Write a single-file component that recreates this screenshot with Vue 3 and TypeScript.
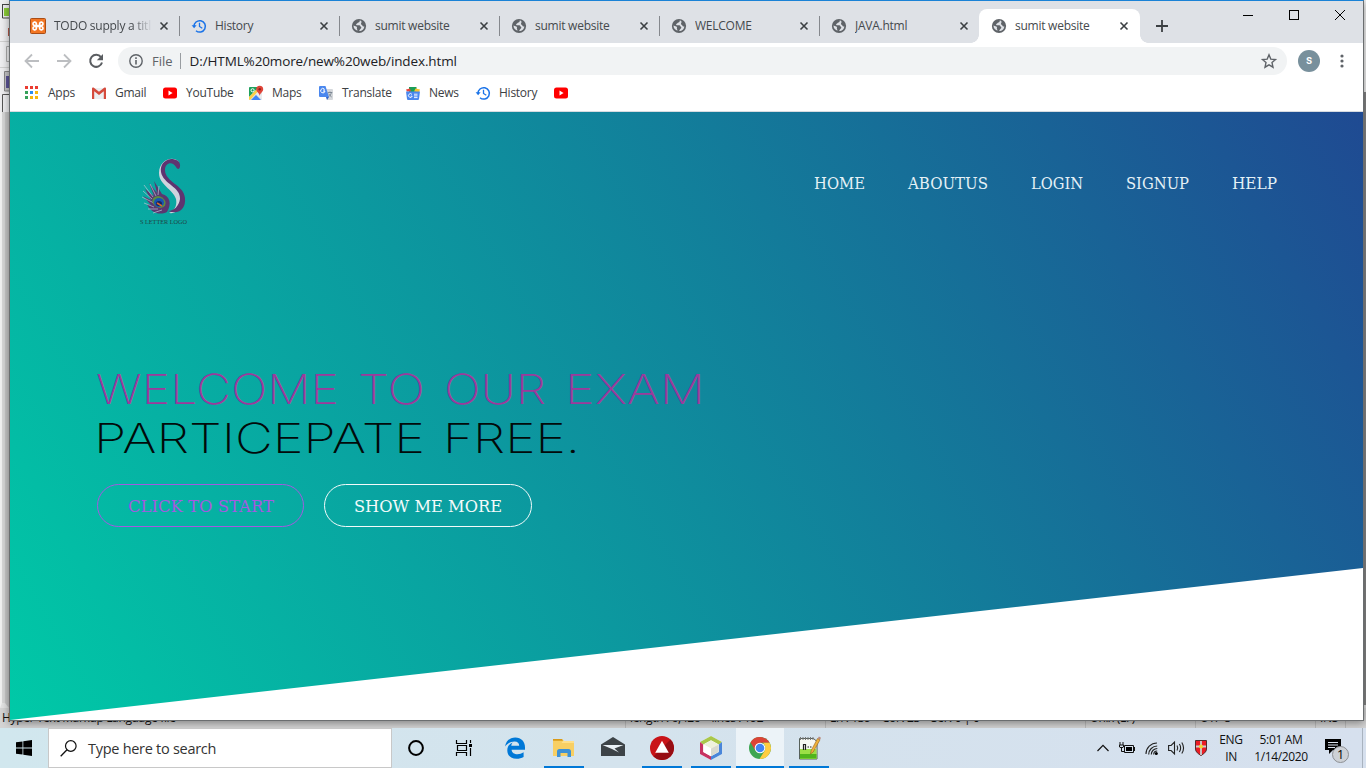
<script setup lang="ts">
interface Tab { title: string; icon: string; active?: boolean }
interface Bookmark { label: string; icon: string; width: number }
interface TaskItem { icon: string; running?: boolean; active?: boolean; name: string }
interface Word { t: string; x: number; w: number }

const tabs: Tab[] = [
  { title: 'TODO supply a titl', icon: 'xampp' },
  { title: 'History', icon: 'history' },
  { title: 'sumit website', icon: 'globe' },
  { title: 'sumit website', icon: 'globe' },
  { title: 'WELCOME', icon: 'globe' },
  { title: 'JAVA.html', icon: 'globe' },
  { title: 'sumit website', icon: 'globe', active: true },
]

const bookmarks: Bookmark[] = [
  { label: 'Apps', icon: 'apps', width: 67 },
  { label: 'Gmail', icon: 'gmail', width: 71 },
  { label: 'YouTube', icon: 'youtube', width: 86 },
  { label: 'Maps', icon: 'maps', width: 70 },
  { label: 'Translate', icon: 'translate', width: 87 },
  { label: 'News', icon: 'news', width: 70 },
  { label: 'History', icon: 'history', width: 78 },
  { label: '', icon: 'youtube', width: 20 },
]

const nav = [
  { label: 'HOME', w: 50 },
  { label: 'ABOUTUS', w: 79 },
  { label: 'LOGIN', w: 51 },
  { label: 'SIGNUP', w: 62 },
  { label: 'HELP', w: 44 },
]

const lineOne: Word[] = [
  { t: 'WELCOME', x: -1, w: 243 },
  { t: 'TO', x: 261, w: 67 },
  { t: 'OUR', x: 347, w: 102 },
  { t: 'EXAM', x: 468, w: 140 },
]
const lineTwo: Word[] = [
  { t: 'PARTICEPATE', x: -3, w: 331 },
  { t: 'FREE.', x: 346, w: 137 },
]

const tasks: TaskItem[] = [
  { name: 'Edge', icon: 'edge' },
  { name: 'Explorer', icon: 'explorer', running: true },
  { name: 'Mail', icon: 'mail' },
  { name: 'Player', icon: 'triangle', running: true },
  { name: 'NetBeans', icon: 'cube', running: true },
  { name: 'Chrome', icon: 'chrome', running: true, active: true },
  { name: 'Notepad++', icon: 'npp', running: true },
]

const statusCells = [
  { text: 'Hyper Text Markup Language file', w: 626 },
  { text: 'length : 6,426    lines : 192', w: 200 },
  { text: 'Ln : 139    Col : 23    Sel : 0 | 0', w: 260 },
  { text: 'Unix (LF)', w: 110 },
  { text: 'UTF-8', w: 120 },
  { text: 'INS', w: 30 },
]
</script>

<template>
  <div class="desktop">
    <svg class="defs" width="0" height="0">
      <symbol id="globe" viewBox="0 0 16 16">
        <circle cx="8" cy="8" r="7.100" fill="#5f6368" />
        <path d="M8.600 2.600c.3 1-.2 1.700-1.200 1.900-.9.2-.9 1-1.700 1.300-.8.3-.8 1.300.1 1.500h2.600c.9.200.9 1.100 1.500 1.500.7.500.500 1.500-.3 1.900-.8.400-.8 1.500-1.600 2.400 3.100.1 5.200-2.200 5.300-4.900-.9.600-1.700.2-1.900-.6-.2-.9-1.300-.8-1.400-1.700-.1-.8.800-1.300.5-2.300-.2-.5-1.100-1-1.900-1z" fill="#dee1e6" />
        <path d="M2.500 7.600c.9.100 1.800.8 2.700 1 .9.200.9 1 .7 1.600-.2.900.6 1 .5 2.500C4 12 2.400 10 2.500 7.600z" fill="#dee1e6" />
      </symbol>
      <symbol id="history" viewBox="0 0 16 16">
        <path d="M3 8.600A5.700 5.700 0 1 1 5 12.700" fill="none" stroke="#1a73e8" stroke-width="1.500" />
        <path d="M.6 7.300h5L3.100 10.300z" fill="#1a73e8" />
        <path d="M8.500 4.800v3.700l2.800 1.700" fill="none" stroke="#1a73e8" stroke-width="1.300" />
      </symbol>
      <symbol id="xampp" viewBox="0 0 16 16">
        <rect x=".5" y=".5" width="15" height="15" rx="1" fill="#f37623" stroke="#a94d16" />
        <path d="M6.300 6.200V5.300a1.700 1.700 0 1 0-1.700 2.200h6.800a1.700 1.700 0 1 0-1.700-2.200v5.400a1.700 1.700 0 1 0 1.700-2.200H4.600a1.700 1.700 0 1 0 1.700 2.200z" fill="none" stroke="#fff" stroke-width="1.700" />
      </symbol>
      <symbol id="apps" viewBox="0 0 16 16">
        <path d="M1 1h3v3H1zM6 1h3v3H6zM11 1h3v3h-3z" fill="#ea3c31" />
        <path d="M1 6h3v3H1zM1 11h3v3H1z" fill="#36a15a" />
        <path d="M6 6h3v3H6z" fill="#2a8cf0" />
        <path d="M11 6h3v3h-3zM6 11h3v3H6zM11 11h3v3h-3z" fill="#f8b60c" />
      </symbol>
      <symbol id="gmail" viewBox="0 0 16 16">
        <path d="M2 3h12v11H2z" fill="#eceff1" />
        <path d="M1 3.500v10.500h2.200V6.200L8 10l4.800-3.800V14H15V3.500c0-1-1.100-1.400-1.900-.8L8 6.800 2.900 2.700C2.100 2.100 1 2.500 1 3.500z" fill="#d54b3d" />
      </symbol>
      <symbol id="youtube" viewBox="0 0 16 16">
        <rect x="1" y="2.500" width="14" height="11" rx="2.500" fill="#f00" />
        <path d="M6.500 5.600v4.800L10.600 8z" fill="#fff" />
      </symbol>
      <symbol id="maps" viewBox="0 0 16 16">
        <rect x="1" y="2" width="13" height="13" rx="1" fill="#dfe3e6" />
        <path d="M1 3q0-1 1-1h9L1 12z" fill="#1fa15d" />
        <path d="M3 15l5-5 5 5z" fill="#4285f4" />
        <path d="M1 12l10-10 2 1L2 15q-1-.2-1-1z" fill="#fdd045" />
        <path d="M8 9l6 5V9l-3-3z" fill="#e9ecee" />
        <circle cx="4.600" cy="5.300" r="1.600" fill="none" stroke="#fff" />
        <path d="M11.700 11C11.500 8 8.200 7 8.200 4.200a3.500 3.500 0 0 1 7 0C15.200 7 12 8 11.700 11z" fill="#e04438" />
        <circle cx="11.700" cy="4.200" r="1.200" fill="#8f1f1a" />
      </symbol>
      <symbol id="translate" viewBox="0 0 16 16">
        <path d="M6 4h8q1 0 1 1v9q0 1-1 1H9z" fill="#d5d8dc" />
        <path d="M2 1h5.500L11 12H2q-1 0-1-1V2q0-1 1-1z" fill="#4a87ee" />
        <path d="M8 12h3l-2 3z" fill="#3062c8" />
        <path d="M7 5H5.300M6.400 4.100A2.200 2.200 0 1 0 7 6.200H5.200" fill="none" stroke="#fff" />
        <path d="M9.800 7.500h4.500M12 6.500v1M13.500 7.500q-.8 3-2.700 4.200M10.700 8.700q1 2 3 3.300" fill="none" stroke="#6f7b88" stroke-width=".8" />
      </symbol>
      <symbol id="news" viewBox="0 0 16 16">
        <path d="M4 2h7.500v5H4z" fill="#1b9e55" /><path d="M1 4.500L5 3.500l1 3H2z" fill="#e8453c" />
        <path d="M10.500 3.500l4.500 1-1 3-5-1z" fill="#fbc02d" />
        <path d="M1 6.500h14l-1 7.500q-.1 1-1 1H3q-.9 0-1-1z" fill="#4a87ee" />
        <path d="M7 9.500A1.900 1.900 0 1 0 7.200 11.200H5.700M9 9.200h3.500M9 10.900h3.500M9 12.600h3.500" fill="none" stroke="#fff" stroke-width=".9" />
      </symbol>
      <symbol id="edge" viewBox="0 0 24 24">
        <path d="M2 10.500C3 5 6.800 1.500 12.300 1.500c6 0 9.700 4.300 9.700 9.800v2.400H8.600c.2 3 2.700 4.500 5.800 4.500 2.300 0 4.400-.7 6.200-1.900v4.600c-2 1.200-4.500 1.800-7 1.800-5.500 0-9.300-3.200-9.300-8.300 0-3.900 2-6.500 5.500-8-1 .9-1.400 2.100-1.500 3.400h7.900c0-2.700-1.500-4.300-4.600-4.300-4 0-7.300 2-9.600 5z" fill="#0078d7" />
      </symbol>
      <symbol id="explorer" viewBox="0 0 24 24">
        <path d="M1 4q0-1 1-1h8l2 2h9q1 0 1 1v14H1z" fill="#f8cf63" />
        <path d="M1 3h9l1 1.800H1z" fill="#d99a18" /><path d="M11 5h11v2H9.500z" fill="#ffe08a" />
        <path d="M5 21v-5.500q0-2.500 2.500-2.500h9q2.500 0 2.500 2.500V21h-3.500v-4h-7v4z" fill="#3e92d6" />
      </symbol>
      <symbol id="mail" viewBox="0 0 24 24">
        <path d="M0 8.500L12 1l12 7.500V20H0z" fill="#3d4347" /><path d="M1.500 9h21L13.500 12.500l4.500 4-7-3.500z" fill="#eaf1f6" />
      </symbol>
      <symbol id="triangle" viewBox="0 0 24 24">
        <circle cx="12" cy="12" r="12" fill="#c91418" /><path d="M20.500 3.500A12 12 0 0 1 3.500 20.500z" fill="#970d13" />
        <path d="M12 4.700l6.800 12H5.200z" fill="#fff" />
      </symbol>
      <symbol id="cube" viewBox="0 0 24 24">
        <path d="M12 0l11 6v12l-11 6L1 18V6z" fill="#fff" />
        <path d="M1 6l11-6 11 6-3.200 2.600L12 4.200 4.200 8.600z" fill="#a9c74a" />
        <path d="M1 6l3.200 2.600v7.300L12 20.200V24L1 18z" fill="#c73360" />
        <path d="M23 6l-3.200 2.600v7.300L12 20.200V24l11-6z" fill="#4a86d9" />
        <path d="M12 4.500l7.500 4.100-7.500 4-7.500-4z" fill="#eef1dc" />
        <path d="M12 12.500v7.700l7.500-4.200V8.600z" fill="#d9dad0" /><path d="M4.500 8.600l7.500 4v7.600L4.500 16z" fill="#fff" />
      </symbol>
      <symbol id="chrome" viewBox="0 0 24 24">
        <circle cx="12" cy="12" r="11" fill="#3ea653" />
        <path d="M2.500 6.400A11 11 0 0 1 21.600 6.800H12L7.500 14.700z" fill="#db4437" />
        <path d="M21.600 6.800A11 11 0 0 1 11.500 23l5.200-8.300Q18.500 10 15 6.800z" fill="#ffcd40" />
        <circle cx="12" cy="12" r="5.300" fill="#fff" /><circle cx="12" cy="12" r="4.300" fill="#4285f4" />
      </symbol>
      <symbol id="npp" viewBox="0 0 24 24">
        <path d="M2.500 2.500h14l3.500 3v17.500H2.500z" fill="#f6f8f3" stroke="#56605a" />
        <path d="M3 13h16.500v10H3z" fill="#9be046" /><path d="M3 18h16.500v4.500H3z" fill="#50b51c" />
        <path d="M3.500 1v3M6 1v3M8.500 1v3M11 1v3M13.500 1v3M16 1v3" stroke="#777" />
        <path d="M6.500 14V8.500h2V14M10.500 11h1.500M13 11h1.500" fill="none" stroke="#222" stroke-width="1.200" />
        <path d="M13.500 18l.7-3.500L20.500 2.500l2.500 1.300-6.800 12.200z" fill="#efb13a" stroke="#95631d" stroke-width=".6" />
        <path d="M20.700 2.500l1.200-2 2.100 1.200-1 2z" fill="#b98a7c" />
      </symbol>
    </svg>

    <div class="editor">
      <div class="editor-side">
        <svg width="9" height="112" viewBox="0 0 9 112">
          <rect width="9" height="112" fill="#eeeef0" />
          <path d="M2.500 4.500H9M2.500 4v14H9" stroke="#444" fill="none" /><path d="M4 8h5v8H4z" fill="#8acb37" />
          <path d="M8 28h1v8H8z" fill="#b35a4b" /><path d="M0 41.500h9M0 67.500h9" stroke="#d0d0d0" />
          <path d="M9 46.500H6.500v15H9" stroke="#aaa" fill="none" />
          <path d="M9 71.500H4.500V91H9" stroke="#888" fill="#c4c4c6" /><path d="M6 76h3v12H6z" fill="#5b5396" />
          <path d="M9 94.500H2.500V112" stroke="#555" fill="none" />
        </svg>
        <div class="editor-edge"></div>
      </div>
      <div class="status">
        <span v-for="c in statusCells" :key="c.text" :style="{ width: c.w + 'px' }">{{ c.text }}</span>
      </div>
    </div>

    <main class="window">
      <header class="tabstrip">
        <div v-for="(t, i) in tabs" :key="i" class="tab" :class="{ active: t.active, plain: i >= 5, first: i === 0 }">
          <svg class="ico"><use :href="'#' + t.icon" /></svg>
          <span class="tab-title" :class="{ faded: i === 0 }">{{ t.title }}</span>
          <svg class="close" viewBox="0 0 8 8"><path d="M.5.5l7 7M7.500.5l-7 7" stroke="#3c4043" stroke-width="1.600" /></svg>
        </div>
        <svg class="plus" viewBox="0 0 12 12"><path d="M6 0v12M0 6h12" stroke="#3c4043" stroke-width="1.800" /></svg>
        <div class="controls">
          <svg width="10" height="10"><path d="M0 5.500h10" stroke="#000" /></svg>
          <svg width="10" height="10"><rect x=".5" y=".5" width="9" height="9" fill="none" stroke="#000" /></svg>
          <svg width="10" height="10"><path d="M0 0l10 10M10 0L0 10" stroke="#000" /></svg>
        </div>
      </header>

      <div class="toolbar">
        <svg class="tool" viewBox="0 0 16 16"><path d="M15 8H2M8 1.500L1.500 8 8 14.500" fill="none" stroke="#bcbec1" stroke-width="1.800" /></svg>
        <svg class="tool" viewBox="0 0 16 16"><path d="M1 8h13M8 1.500L14.500 8 8 14.500" fill="none" stroke="#bcbec1" stroke-width="1.800" /></svg>
        <svg class="tool" viewBox="0 0 16 16"><path d="M13 4.200A6 6 0 1 0 14 9.500" fill="none" stroke="#5a5d61" stroke-width="2" /><path d="M15 1v6.200H8.800z" fill="#5a5d61" /></svg>
        <div class="omnibox">
          <svg width="14" height="14" viewBox="0 0 14 14"><circle cx="7" cy="7" r="6.200" fill="none" stroke="#5f6368" stroke-width="1.400" /><path d="M7 6v4.500M7 3.200v1.700" stroke="#5f6368" stroke-width="1.600" /></svg>
          <span class="scheme">File</span><i class="bar"></i>
          <span class="url">D:/HTML%20more/new%20web/index.html</span>
          <svg class="star" viewBox="0 0 16 16"><path d="M8 1.800l1.800 4.300 4.700.4-3.500 3.100 1 4.600L8 11.800l-4 2.400 1-4.600-3.500-3.100 4.700-.4z" fill="none" stroke="#5f6368" stroke-width="1.400" /></svg>
        </div>
        <div class="avatar">s</div>
        <svg class="dots" viewBox="0 0 4 14"><circle cx="2" cy="2" r="1.600" /><circle cx="2" cy="7" r="1.600" /><circle cx="2" cy="12" r="1.600" /></svg>
      </div>

      <nav class="bookmarks">
        <div v-for="(b, i) in bookmarks" :key="i" class="bm" :style="{ width: b.width + 'px' }">
          <svg class="ico"><use :href="'#' + b.icon" /></svg><span>{{ b.label }}</span>
        </div>
      </nav>

      <section class="page">
        <div class="hero">
          <div class="hero-top">
            <svg class="logo" width="50" height="72" viewBox="0 0 50 72">
              <path d="M39 10C35 2 24 4 24 14c0 12 20 15 18 31-1 8-6 12-12 11 7-3 8-9 7-14C34 32 20 28 20 16 20 3 34-2 40 5z" fill="#cfd4de" />
              <path d="M41 10c1-6-4-8-9-8-7 1-11 6-10 13 2 12 20 15 19 27-1 7-6 12-12 12 11 4 18-2 17-13C45 28 26 25 26 13c0-8 8-9 11-3 1 2 3 3 4 0z" fill="#5f3470" />
              <path d="M28 55C20 59 11 55 8 47l4 1-8-9 8 4-6-11 9 7-5-13 8 10-3-12 8 13c8 2 10 10 5 18z" fill="#5a3770" />
              <path d="M5 28l9 12M4 34l9 8M3 40l12 6M5 46l10 4M9 52l10 0M11 27l6 12M20 29l-1 9M14 56l9-3" stroke="#b7c6d4" stroke-width=".7" />
              <ellipse cx="20" cy="45" rx="7" ry="5.500" fill="#5c8a42" transform="rotate(30 20 45)" />
              <ellipse cx="20" cy="45.500" rx="5" ry="4.500" fill="#1753b4" /><ellipse cx="20" cy="46.500" rx="3" ry="2.500" fill="#17245e" />
              <path d="M18 46l5 3" stroke="#d26a32" stroke-width="1.600" />
              <text x="1" y="67" textLength="47" lengthAdjust="spacingAndGlyphs" font-size="6.500" font-family="Liberation Serif, serif" fill="#204443">S LETTER LOGO</text>
            </svg>
            <ul class="menu">
              <li v-for="n in nav" :key="n.label">
                <svg :width="n.w" height="22"><text x="-1" y="16" :textLength="n.w + 1" lengthAdjust="spacingAndGlyphs">{{ n.label }}</text></svg>
              </li>
            </ul>
          </div>
          <div class="hero-text">
            <h1>
              <svg class="line purple" width="620" height="49"><text v-for="w in lineOne" :key="w.t" :x="w.x" y="35" :textLength="w.w" lengthAdjust="spacingAndGlyphs">{{ w.t }}</text></svg>
              <svg class="line" width="620" height="49"><text v-for="w in lineTwo" :key="w.t" :x="w.x" y="35" :textLength="w.w" lengthAdjust="spacingAndGlyphs">{{ w.t }}</text></svg>
            </h1>
            <div class="buttons">
              <a class="btn start"><svg width="146" height="22"><text x="0" y="16.500" textLength="146" lengthAdjust="spacingAndGlyphs">CLICK TO START</text></svg></a>
              <a class="btn more"><svg width="148" height="22"><text x="0" y="16.500" textLength="148" lengthAdjust="spacingAndGlyphs">SHOW ME MORE</text></svg></a>
            </div>
          </div>
        </div>
      </section>
    </main>

    <footer class="taskbar">
      <div class="start-btn">
        <svg width="16" height="16" viewBox="0 0 16 16"><path d="M0 2.300L6.500 1.400v6.200H0zM7.300 1.300L16 0v7.600H7.300zM0 8.400h6.500v6.200L0 13.700zM7.300 8.400H16V16l-8.700-1.300z" /></svg>
      </div>
      <div class="search">
        <svg width="17" height="17" viewBox="0 0 17 17"><circle cx="10.800" cy="6" r="5.300" fill="none" stroke="#111" stroke-width="1.200" /><path d="M7 9.800L.7 16.200" stroke="#111" stroke-width="1.300" /></svg>
        <span>Type here to search</span>
      </div>
      <div class="task sys"><svg width="16" height="16" viewBox="0 0 16 16"><circle cx="8" cy="8" r="6.900" fill="none" stroke="#000" stroke-width="2" /></svg></div>
      <div class="task sys">
        <svg width="17" height="16" viewBox="0 0 17 16"><path d="M.5 0v3.500h10V0M.5 16v-3.500h10V16M1.500 5.500h9v5h-9zM14.500 0v3M14.500 8v8" fill="none" stroke="#000" stroke-width="1.200" /><path d="M13 4h3v3h-3z" /></svg>
      </div>
      <div class="tasks">
        <div v-for="t in tasks" :key="t.name" class="task" :class="{ running: t.running, current: t.active }">
          <svg width="24" height="24"><use :href="'#' + t.icon" /></svg>
        </div>
      </div>
      <div class="tray">
        <svg width="12" height="8" viewBox="0 0 12 8"><path d="M.5 7L6 1.300 11.500 7" fill="none" stroke="#111" stroke-width="1.200" /></svg>
        <svg width="16" height="12" viewBox="0 0 16 12"><path d="M5.500 3.500h9v7h-9zM15.500 5v4M1 0v3M4 0v3M.5 3h4v2q-2 2-4 0zM2.500 5v4.500h3" fill="none" stroke="#111" /><path d="M7 5h6v4H7z" /></svg>
        <svg width="13" height="13" viewBox="0 0 13 13"><path d="M1 12A11 11 0 0 1 12 1M3.700 12.500A8.500 8.500 0 0 1 12.200 4M6.300 12.500a6 6 0 0 1 6-6M8.700 12.500a3.500 3.500 0 0 1 3.500-3.500" fill="none" stroke="#222" stroke-width="1.100" /><circle cx="11.300" cy="11.500" r="1.500" /></svg>
        <svg width="17" height="14" viewBox="0 0 17 14"><path d="M.6 4.500h2.500L6.500 1v12L3.100 9.500H.6zM9 4.500q1.500 2.500 0 5M11.400 3q2.500 4 0 8M13.800 1.500q3.500 5.500 0 11" fill="none" stroke="#222" stroke-width="1.100" /></svg>
        <svg width="12" height="16" viewBox="0 0 12 16"><path d="M.5.500h11V9c0 3-3 5-5.500 6.500C3.500 14 .5 12 .5 9z" fill="#ec1c24" stroke="#552b2b" /><path d="M6 1v14M1 6.500h10" stroke="#c8d0d0" stroke-width="1.800" /><circle cx="6" cy="6.500" r="2" fill="#f3d530" /></svg>
      </div>
      <div class="lang"><span>ENG</span><span>IN</span></div>
      <div class="clock"><span>5:01 AM</span><span>1/14/2020</span></div>
      <div class="notify">
        <svg width="26" height="26" viewBox="0 0 26 26"><path d="M1 1h16v11H9l-4 4v-4H1z" /><path d="M4 4.500h10M4 7h10M4 9.500h7" stroke="#dbe3ee" /><circle cx="16.500" cy="16.500" r="8" fill="#cdd1d6" stroke="#8d9094" /><text x="16.500" y="21" text-anchor="middle" font-size="12.500" font-family="Open Sans, sans-serif">1</text></svg>
      </div>
    </footer>
  </div>
</template>

<style>
body { margin: 0; overflow: hidden; }
</style>

<style scoped>
.desktop { position: relative; width: 1366px; height: 768px; overflow: hidden; display: flex; flex-direction: column; font-family: "Open Sans", "Noto Sans", sans-serif; background: #e4e4e4; }
.defs { position: absolute; }
svg { display: block; flex: none; overflow: visible; }
.editor { height: 728px; flex: none; display: flex; flex-direction: column; background: linear-gradient(#f0f0f0 0 92px, #858585 92px 705px, #ddd 705px); }
.editor-side { height: 708px; display: flex; flex-direction: column; }
.editor-edge { width: 9px; flex: 1; box-sizing: border-box; background: #d6d6d6; border-left: 2px solid #f0f0f0; border-right: 4px solid #c6c6c6; border-bottom: 5px solid #e2e2e2; }
.status { height: 20px; display: flex; overflow: hidden; background: #d4d4d4; font-size: 12px; line-height: 20px; color: #111; letter-spacing: -.35px; white-space: pre; }
.status span { padding-left: 2px; box-sizing: border-box; border-right: 1px solid #bbb; }
.status span + span { padding-left: 4px; }

.window { position: absolute; left: 9px; top: 0; width: 1355px; height: 721px; box-sizing: border-box; border: 1px solid #6b6e70; border-top-color: #1a82d6; background: #fff; display: flex; flex-direction: column; box-shadow: 0 2px 8px rgba(0,0,0,.4); }
.tabstrip { height: 42px; flex: none; background: #dee1e6; display: flex; align-items: flex-end; padding-left: 10px; box-sizing: border-box; }
.tab { position: relative; width: 160px; height: 34px; box-sizing: border-box; display: flex; align-items: center; padding: 0 12px 1px 11px; }
.tab.first { padding-left: 10px; }
.tab::after { content: ""; position: absolute; right: 0; top: 7px; width: 1px; height: 20px; background: #85888d; }
.tab.plain::after { display: none; }
.tab.active { background: #fff; border-radius: 8px 8px 0 0; width: 161px; padding-left: 12px; margin-left: -1px; padding-right: 12px; }
.tab.active::before, .tab.active::after { content: ""; display: block; position: absolute; top: auto; bottom: 0; width: 8px; height: 8px; }
.tab.active::before { left: -8px; background: radial-gradient(circle at 0 0, #dee1e6 7.500px, #fff 8px); }
.tab.active::after { right: -8px; background: radial-gradient(circle at 100% 0, #dee1e6 7.500px, #fff 8px); }
.ico { width: 16px; height: 16px; }
.tab-title { flex: 1; margin: 0 8px; font-size: 12px; letter-spacing: -.25px; color: #45494d; white-space: nowrap; overflow: hidden; }
.faded { -webkit-mask-image: linear-gradient(90deg, #000 80%, transparent); mask-image: linear-gradient(90deg, #000 80%, transparent); }
.close { width: 8px; height: 8px; }
.plus { width: 12px; height: 12px; margin: 0 0 11px 16px; }
.controls { margin-left: auto; align-self: flex-start; display: flex; gap: 36px; padding: 9px 18px 0 0; }
.toolbar { height: 36px; flex: none; display: flex; align-items: center; padding-left: 14px; }
.tool { width: 16px; height: 16px; margin-right: 16px; }
.omnibox { width: 1169px; height: 28px; margin-left: -2px; box-sizing: border-box; border-radius: 14px; background: #f1f3f4; display: flex; align-items: center; padding: 0 10px 0 11px; font-size: 13.500px; }
.scheme { margin-left: 9px; color: #5f6368; font-size: 13px; }
.bar { width: 1px; height: 16px; background: #999da1; margin: 0 9px 0 7px; }
.url { color: #202124; letter-spacing: -.12px; }
.star { width: 16px; height: 16px; margin-left: auto; }
.avatar { width: 22px; height: 22px; border-radius: 50%; margin-left: 11px; background: #78909c; color: #fff; font: 500 12px/21px Roboto, sans-serif; text-align: center; }
.dots { width: 4px; height: 14px; margin-left: 20px; fill: #5f6368; }
.bookmarks { flex: none; border-bottom: 1px solid #d7dbe0; display: flex; padding-left: 14px; box-sizing: border-box; height: 33px; }
.bm { display: flex; align-items: center; height: 27px; gap: 8px; font-size: 12px; color: #3c4043; letter-spacing: -.25px; }
.page { flex: 1; background: #fff; }
.hero { height: 608px; display: flex; flex-direction: column; clip-path: polygon(0 0, 100% 0, 100% 75%, 0 100%); background: linear-gradient(60deg, #00c9a7, #1f4a92); }
.hero-top { display: flex; justify-content: space-between; padding: 45px 86px 0 129px; }
.menu { display: flex; gap: 44px; list-style: none; margin: 0; padding: 16px 0 0; }
.menu text { font: 16px "DejaVu Serif", serif; fill: #e5f1f6; }
.hero-text { padding: 140px 0 0 87px; }
h1 { margin: 0; font-weight: 300; }
.line { font: 250 41.500px Inter, Lato, sans-serif; fill: #020a0a; }
.purple { fill: #9b3a9c; }
.buttons { display: flex; gap: 20px; padding-top: 17px; }
.btn { height: 43px; box-sizing: border-box; border: 1px solid; border-radius: 22px; display: flex; align-items: center; justify-content: center; width: 207px; color: #a35ae0; }
.btn text { font: 17px "DejaVu Serif", serif; fill: currentColor; }
.more { color: #f3fafa; width: 208px; }

.taskbar { height: 40px; flex: none; position: relative; display: flex; background: linear-gradient(90deg, #d1e7ee, #d4e3ed 45%, #d6e0ee); color: #111; }
.start-btn { width: 48px; display: flex; align-items: center; justify-content: center; }
.search { width: 344px; box-sizing: border-box; border: 1px solid #c8c8c8; background: #fff; display: flex; align-items: center; padding-left: 11px; gap: 11px; font-size: 14.500px; letter-spacing: -.28px; color: #333; }
.task { position: relative; width: 48px; height: 40px; display: flex; align-items: center; justify-content: center; }
.tasks { display: flex; gap: 1px; margin-left: 3px; }
.running::after { content: ""; position: absolute; left: 4px; right: 4px; bottom: 0; height: 2px; background: #0078d7; }
.current { background: #ecf3f8; }
.current::after { left: 0; right: 0; }
.tray { margin-left: auto; display: flex; align-items: center; gap: 10px; }
.lang, .clock { display: flex; flex-direction: column; align-items: center; font-size: 12px; line-height: 17px; padding-top: 3px; letter-spacing: -.35px; white-space: nowrap; }
.lang { width: 26px; margin-left: 11px; }
.clock { width: 56px; margin-left: 9px; }
.notify { width: 40px; box-sizing: border-box; margin-left: 14px; padding: 10px 0 0 1px; border-right: 1px solid #a9b3bf; margin-right: 3px; }
</style>
